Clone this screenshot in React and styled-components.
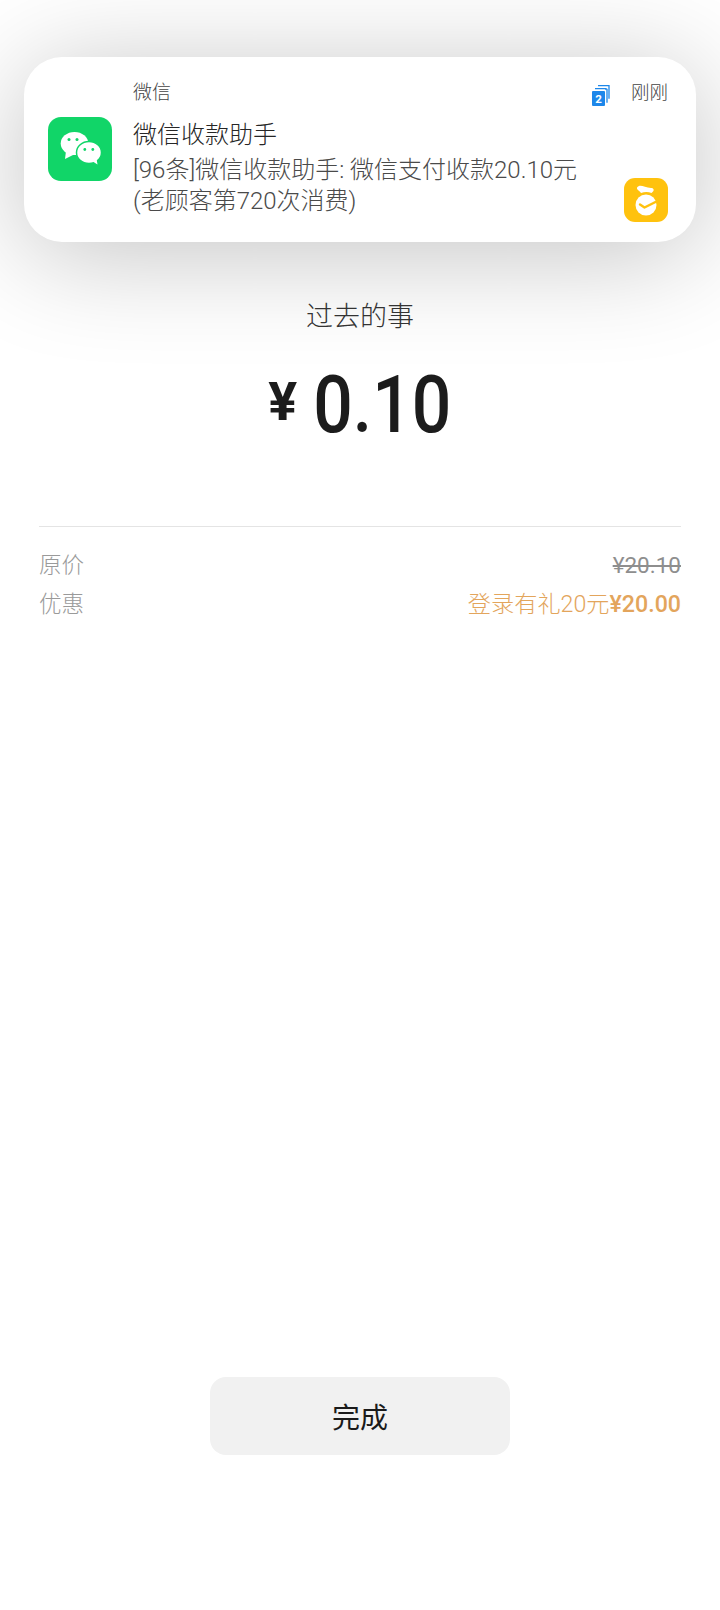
import React from "react";
import styled, { createGlobalStyle } from "styled-components";

const Global = createGlobalStyle`
  html, body { margin: 0; padding: 0; background: #fff; }
  body { font-family: Roboto, "Noto Sans CJK SC", sans-serif; }
`;

const Page = styled.div`
  width: 720px;
  height: 1610px;
  overflow: hidden;
  background: #fff;
  display: flex;
  flex-direction: column;
  align-items: stretch;
`;

const Card = styled.section`
  margin: 57px 24px 0;
  height: 185px;
  box-sizing: border-box;
  background: #fff;
  border-radius: 38px;
  box-shadow: 0 12px 110px rgba(0, 0, 0, 0.24);
  display: grid;
  grid-template-columns: 64px 1fr 44px;
  column-gap: 21px;
  padding: 24px 28px 20px 24px;
`;

const AppIcon = styled.svg`
  width: 64px;
  height: 64px;
  align-self: start;
  margin-top: 36px;
  display: block;
`;

const CardBody = styled.div`
  display: flex;
  flex-direction: column;
  min-width: 0;
`;

const AppName = styled.div`
  font-size: 19px;
  line-height: 24px;
  height: 24px;
  color: #444;
  font-weight: 300;
`;

const Title = styled.div`
  margin-top: 15px;
  font-size: 24px;
  line-height: 30px;
  color: #262626;
  font-weight: 300;
`;

const Message = styled.div`
  margin-top: 5px;
  font-size: 24px;
  line-height: 31px;
  color: #4a4a4a;
  font-weight: 300;
  white-space: nowrap;
`;

const CardSide = styled.div`
  display: flex;
  flex-direction: column;
  align-items: flex-end;
  justify-content: space-between;
`;

const MetaRow = styled.div`
  display: flex;
  align-items: center;
  gap: 21px;
  height: 24px;
`;

const Time = styled.span`
  font-size: 18.500px;
  line-height: 24px;
  color: #444;
  font-weight: 300;
  white-space: nowrap;
`;

const StackIcon = styled.svg`
  width: 18px;
  height: 21px;
  display: block;
  flex: none;
  margin-top: 5px;
`;

const SideIcon = styled.svg`
  width: 44px;
  height: 44px;
  display: block;
`;

const Merchant = styled.h1`
  margin: 57px 0 0;
  font-size: 27px;
  line-height: 36px;
  text-align: center;
  font-weight: 300;
  color: #333;
`;

const Amount = styled.div`
  margin-top: 25px;
  display: flex;
  justify-content: center;
  align-items: baseline;
  color: #1c1c1c;
  height: 90px;
  line-height: 90px;
`;

const Currency = styled.span`
  font-size: 54px;
  font-weight: 700;
  margin-right: 16px;
  position: relative;
  top: -12px;
`;

const Value = styled.span`
  display: inline-block;
  font-size: 80px;
  font-weight: 500;
  transform: scaleX(0.87);
  margin: 0 -10px;
`;

const Breakdown = styled.div`
  margin: 76px 39px 0;
  border-top: 1px solid #e4e4e4;
  padding-top: 23px;
  display: flex;
  flex-direction: column;
  gap: 8px;
`;

const Row = styled.div`
  display: flex;
  justify-content: space-between;
  align-items: center;
  height: 31px;
  font-size: 22.500px;
  line-height: 31px;
`;

const Label = styled.span`
  color: #9a9a9a;
  font-weight: 300;
`;

const Struck = styled.span`
  color: #8e8e8e;
  font-weight: 400;
  text-decoration: line-through;
`;

const Discount = styled.span`
  color: #e3a55c;
  font-weight: 300;
  font-size: 23.200px;
  b {
    font-weight: 500;
  }
`;

const Done = styled.button`
  display: block;
  margin: 757px auto 0;
  width: 300px;
  height: 78px;
  border: 0;
  border-radius: 16px;
  background: #f1f1f1;
  color: #1a1a1a;
  font-family: inherit;
  font-size: 28px;
  font-weight: 400;
`;

const WeChatGlyph = () => (
  <AppIcon viewBox="0 0 64 64" aria-hidden="true">
    <rect width="64" height="64" rx="13" fill="#11d568" />
    <ellipse cx="26.500" cy="26.500" rx="13.800" ry="11.500" fill="#fff" />
    <path d="M18 34l-1 8 8-4z" fill="#fff" />
    <circle cx="21" cy="22.500" r="1.500" fill="#11d568" />
    <circle cx="29" cy="22.500" r="1.500" fill="#11d568" />
    <ellipse cx="41" cy="35.500" rx="12.500" ry="11" fill="#fff" stroke="#11d568" strokeWidth="1.500" />
    <path d="M44 44l5.500 3.500-1-6z" fill="#fff" />
    <circle cx="36.800" cy="32.500" r="1.400" fill="#11d568" />
    <circle cx="44.800" cy="32.500" r="1.400" fill="#11d568" />
  </AppIcon>
);

const StackGlyph = () => (
  <StackIcon viewBox="0 0 18 21" aria-hidden="true">
    <path d="M6 .7h11v13" fill="none" stroke="#1d87ea" strokeWidth="1.300" />
    <path d="M3 3.700h11V5" fill="none" stroke="#1d87ea" strokeWidth="1.300" />
    <path d="M15 3.700v14" fill="none" stroke="#1d87ea" strokeWidth="1.300" />
    <rect x="0" y="6" width="13" height="15" rx="1" fill="#1d87ea" />
    <text x="6.500" y="18" textAnchor="middle" fontFamily="Roboto, sans-serif" fontWeight="700" fontSize="11.500" fill="#fff">2</text>
  </StackIcon>
);

const BagGlyph = () => (
  <SideIcon viewBox="0 0 44 44" aria-hidden="true">
    <rect width="44" height="44" rx="11" fill="#ffc20e" />
    <path fill="#fff" d="M15 8c3-.8 7 2 12 2 2.500 0 3.500 2 2 3.600l-1.500 1.400c-3-1.200-7-1.300-10.500 0-1-1.800-3.500-2.800-4-4.300-.3-1.200.8-2.300 2-2.700z" />
    <ellipse cx="22" cy="27" rx="10.500" ry="10.500" fill="#fff" />
    <path d="M16 26.500l4.500 3 13-6.500" fill="none" stroke="#ffc20e" strokeWidth="2.400" strokeLinecap="round" strokeLinejoin="round" />
  </SideIcon>
);

export default function App() {
  return (
    <Page>
      <Global />
      <Card>
        <WeChatGlyph />
        <CardBody>
          <AppName>微信</AppName>
          <Title>微信收款助手</Title>
          <Message>
            [96条]微信收款助手: 微信支付收款20.10元
            <br />
            (老顾客第720次消费)
          </Message>
        </CardBody>
        <CardSide>
          <MetaRow>
            <StackGlyph />
            <Time>刚刚</Time>
          </MetaRow>
          <BagGlyph />
        </CardSide>
      </Card>
      <Merchant>过去的事</Merchant>
      <Amount>
        <Currency>¥</Currency>
        <Value>0.10</Value>
      </Amount>
      <Breakdown>
        <Row>
          <Label>原价</Label>
          <Struck>¥20.10</Struck>
        </Row>
        <Row>
          <Label>优惠</Label>
          <Discount>登录有礼20元<b>¥20.00</b></Discount>
        </Row>
      </Breakdown>
      <Done>完成</Done>
    </Page>
  );
}
